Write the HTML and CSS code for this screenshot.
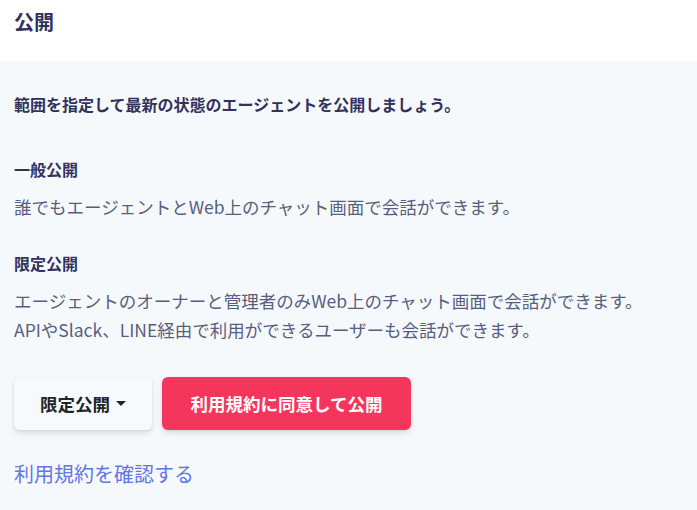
FILE: index.html
```html
<!DOCTYPE html>
<html lang="ja">
<head>
<meta charset="utf-8">
<link rel="stylesheet" href="styles.css">
</head>
<body>
<div class="page">
  <header class="header"><h1 class="title">公開</h1></header>
  <main class="body">
    <p class="lead">範囲を指定して最新の状態のエージェントを公開しましょう。</p>
    <section class="section">
      <h2 class="sub">一般公開</h2>
      <p class="text">誰でもエージェントとWeb上のチャット画面で会話ができます。</p>
    </section>
    <section class="section">
      <h2 class="sub">限定公開</h2>
      <p class="text">エージェントのオーナーと管理者のみWeb上のチャット画面で会話ができます。<br>APIやSlack、LINE経由で利用ができるユーザーも会話ができます。</p>
    </section>
    <div class="actions">
      <button class="btn btn-select">限定公開<span class="caret"></span></button>
      <button class="btn btn-danger">利用規約に同意して公開</button>
    </div>
    <a class="link" href="#">利用規約を確認する</a>
  </main>
</div>
</body>
</html>
```
FILE: styles.css
```css
html, body {
  margin: 0;
  padding: 0;
  background: #f6f9fc;
}
body {
  font-family: "Noto Sans CJK JP", "Noto Sans", sans-serif;
  color: #525f7f;
}
.page {
  width: 697px;
  height: 510px;
  overflow: hidden;
}
.header {
  background: #ffffff;
  height: 62px;
  padding: 0 14px;
  box-sizing: border-box;
}
.title {
  margin: 0;
  padding-top: 8px;
  font-size: 20px;
  line-height: 28px;
  font-weight: 700;
  color: #32325d;
}
.body {
  padding: 28px 14px 0;
}
.lead {
  margin: 0;
  font-size: 16px;
  line-height: 28px;
  font-weight: 700;
  color: #32325d;
}
.section {
  margin-top: 31px;
}
.lead + .section {
  margin-top: 40px;
}
.sub {
  margin: 0;
  font-size: 16px;
  line-height: 22px;
  font-weight: 700;
  color: #32325d;
}
.text {
  margin: 12px 0 0;
  font-size: 17.5px;
  line-height: 29px;
  color: #565f7e;
}
.actions {
  display: flex;
  gap: 10px;
  margin-top: 33px;
}
.btn {
  font-family: inherit;
  font-size: 17.5px;
  font-weight: 700;
  height: 53px;
  border: none;
  border-radius: 6px;
  box-shadow: 0 4px 6px rgba(50, 50, 93, 0.11), 0 1px 3px rgba(0, 0, 0, 0.08);
  display: flex;
  align-items: center;
  justify-content: center;
  padding: 0;
}
.btn-select {
  width: 138px;
  background: #f7fafc;
  color: #212529;
}
.caret {
  display: inline-block;
  margin-left: 6px;
  width: 0;
  height: 0;
  border-left: 5px solid transparent;
  border-right: 5px solid transparent;
  border-top: 5px solid #212529;
}
.btn-danger {
  width: 249px;
  background: #f5365c;
  color: #ffffff;
}
.link {
  display: block;
  margin-top: 29px;
  font-size: 20px;
  line-height: 30px;
  color: #6276e5;
  text-decoration: none;
}
```
